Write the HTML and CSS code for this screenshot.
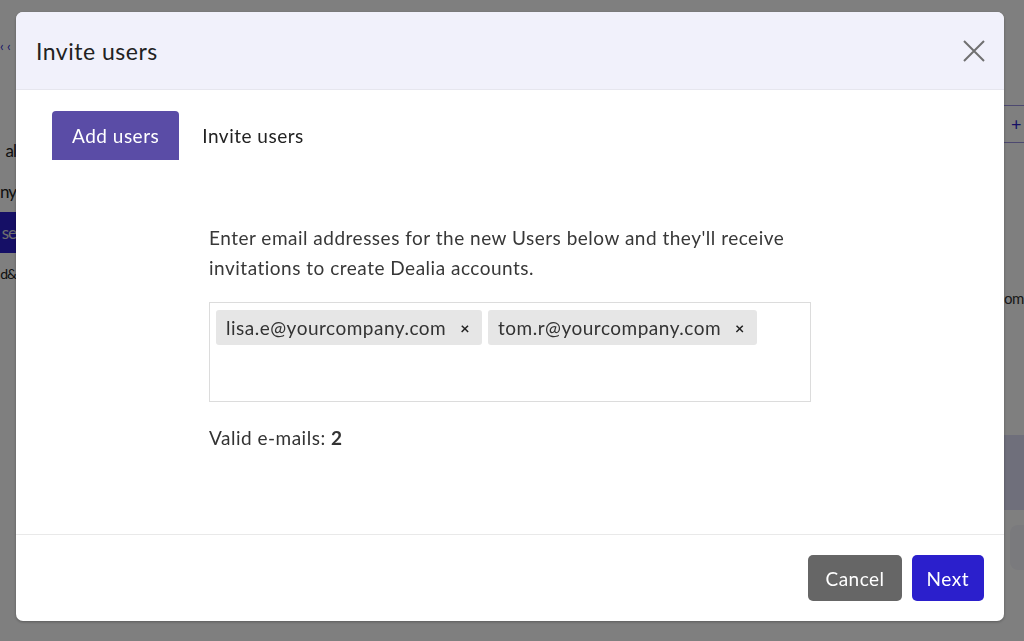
FILE: index.html
```html
<!DOCTYPE html>
<html lang="en">
<head>
  <meta charset="UTF-8">
  <title>Invite users</title>
  <link rel="stylesheet" href="styles.css">
</head>
<body>

<div class="page">
  <div class="sidebar">
    <div class="back">‹ ‹</div>
    <div class="nav-item">al</div>
    <div class="nav-item">ny</div>
    <div class="nav-item active">se</div>
    <div class="nav-item small">d&amp;</div>
  </div>
  <div class="main"></div>
  <div class="aside">
    <div class="add-field">+</div>
    <div class="aside-text">om</div>
    <div class="aside-block"></div>
    <div class="aside-box"></div>
  </div>
</div>

<div class="overlay">
  <div class="modal">
    <div class="modal-header">
      <h2>Invite users</h2>
      <button class="close" type="button" aria-label="Close">
        <svg width="22" height="22" viewBox="0 0 22 22"><path d="M1 1 L21 21 M21 1 L1 21" stroke="#707070" stroke-width="2" fill="none"/></svg>
      </button>
    </div>

    <div class="modal-body">
      <div class="tabs">
        <div class="tab active">Add users</div>
        <div class="tab">Invite users</div>
      </div>

      <div class="invite-form">
        <p class="hint">Enter email addresses for the new Users below and they'll receive invitations to create Dealia accounts.</p>
        <div class="tag-input">
          <span class="tag">lisa.e@yourcompany.com <span class="remove">×</span></span>
          <span class="tag">tom.r@yourcompany.com <span class="remove">×</span></span>
        </div>
        <p class="count">Valid e-mails: <b>2</b></p>
      </div>
    </div>

    <div class="modal-footer">
      <button type="button" class="btn btn-cancel">Cancel</button>
      <button type="button" class="btn btn-next">Next</button>
    </div>
  </div>
</div>

</body>
</html>
```

FILE: styles.css
```css
body {
  font-family: 'Lato', 'Open Sans', sans-serif;
  font-size: 19px;
  letter-spacing: 0.5px;
  margin: 0;
  padding: 0;
  background: #fff;
  color: #333;
  height: 641px;
  overflow: hidden;
}

.page {
  display: flex;
  height: 641px;
}

/* page behind the modal, only its edges show */
.sidebar {
  width: 16px;
  padding-top: 38px;
}

.back {
  color: #2b1fcc;
  font-size: 13px;
  letter-spacing: 0;
  height: 92px;
  line-height: 16px;
}

.nav-item {
  display: flex;
  justify-content: flex-end;
  align-items: center;
  height: 41px;
  font-size: 17px;
  letter-spacing: -1px;
  white-space: nowrap;
  color: #222;
}

.nav-item.small {
  font-size: 14px;
}

.nav-item.active {
  background: #2b1fcc;
  color: #ddd;
}

.main {
  flex: 1;
}

.aside {
  width: 20px;
  padding-top: 105px;
}

.add-field {
  height: 36px;
  border-top: 1px solid #9a92e0;
  border-bottom: 1px solid #9a92e0;
  color: #2b1fcc;
  font-size: 18px;
  display: flex;
  align-items: center;
  padding-left: 7px;
}

.aside-text {
  margin-top: 146px;
  font-size: 15px;
  letter-spacing: -0.5px;
  text-align: right;
  padding-right: 2px;
}

.aside-block {
  margin-top: 128px;
  height: 75px;
  background: #dedef6;
}

.aside-box {
  margin: 15px 0 0 6px;
  height: 45px;
  background: #f4f4fa;
  border-radius: 8px 0 0 8px;
}

.overlay {
  position: fixed;
  inset: 0;
  background: rgba(0, 0, 0, 0.5);
  padding: 12px 0 0 16px;
}

.modal {
  width: 988px;
  height: 609px;
  background: #fff;
  border-radius: 7px;
  overflow: hidden;
  display: flex;
  flex-direction: column;
  box-shadow: 0 1px 3px rgba(0, 0, 0, 0.3);
}

.modal-header {
  height: 77px;
  background: #f1f1fb;
  border-bottom: 1px solid #e6e6ee;
  display: flex;
  align-items: center;
  justify-content: space-between;
  padding: 0 19px 0 20px;
}

.modal-header h2 {
  margin: 0;
  font-size: 23px;
  font-weight: 400;
  color: #222;
}

.close {
  background: none;
  border: none;
  padding: 0;
  cursor: pointer;
  display: flex;
}

.modal-body {
  flex: 1;
  padding: 21px 36px 0;
}

.tabs {
  display: flex;
  align-items: center;
}

.tab {
  height: 49px;
  padding: 0 20px;
  display: flex;
  align-items: center;
  color: #222;
}

.tab.active {
  background: #5a4ca6;
  color: #fff;
  border-radius: 4px 4px 0 0;
}

.tab + .tab {
  padding-left: 23px;
}

.invite-form {
  width: 602px;
  margin: 63px auto 0;
}

.hint {
  margin: 0;
  line-height: 30px;
  color: #383838;
}

.tag-input {
  margin-top: 19px;
  height: 100px;
  box-sizing: border-box;
  border: 1px solid #dcdcdc;
  padding: 7px 6px;
  display: flex;
  align-items: flex-start;
  gap: 6px;
}

.tag {
  height: 35px;
  display: inline-flex;
  align-items: center;
  background: #e6e6e6;
  border-radius: 3px;
  padding: 0 12px 0 10px;
}

.remove {
  margin-left: 14px;
  font-size: 16px;
  font-weight: 700;
  color: #222;
}

.count {
  margin: 21px 0 0;
  line-height: 30px;
}

.modal-footer {
  border-top: 1px solid #e9e9e9;
  padding: 20px;
  display: flex;
  justify-content: flex-end;
  gap: 10px;
}

.btn {
  height: 46px;
  padding: 0 17px;
  border: none;
  border-radius: 5px;
  font-family: inherit;
  font-size: 19px;
  letter-spacing: 0.5px;
  color: #fff;
  cursor: pointer;
}

.btn-cancel {
  background: #666;
}

.btn-next {
  background: #2b1fcc;
  padding: 0 15px;
}
```
